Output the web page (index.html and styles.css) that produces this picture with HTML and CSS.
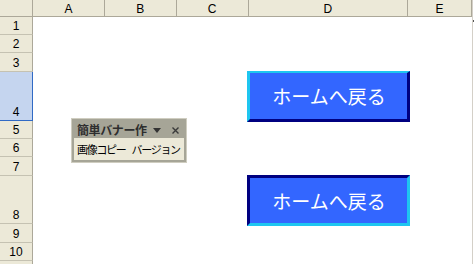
FILE: index.html
```html
<!DOCTYPE html>
<html lang="ja">
<head>
<meta charset="utf-8">
<title>Sheet</title>
<link rel="stylesheet" href="styles.css">
</head>
<body>
<div class="sheet">
  <div class="corner"></div>
  <div class="colheads">
    <div class="ch c72">A</div>
    <div class="ch c72">B</div>
    <div class="ch c72">C</div>
    <div class="ch c160">D</div>
    <div class="ch c64">E</div>
  </div>
  <div class="edge"><span class="tick"></span></div>
  <div class="rowheads">
    <div class="rh r18">1</div>
    <div class="rh r18">2</div>
    <div class="rh r19">3</div>
    <div class="rh r49 sel">4</div>
    <div class="rh r18">5</div>
    <div class="rh r18">6</div>
    <div class="rh r19">7</div>
    <div class="rh r48">8</div>
    <div class="rh r19">9</div>
    <div class="rh r18">10</div>
    <div class="rh r18"></div>
  </div>
  <div class="cells">
    <div class="btn btn-up"><span>ホームへ戻る</span></div>
    <div class="btn btn-down"><span>ホームへ戻る</span></div>
    <div class="toolbar">
      <div class="tb-title">
        <span class="tb-name">簡単バナー作</span>
        <span class="tb-drop"></span>
        <svg class="tb-close" width="7" height="7" viewBox="0 0 7 7"><path d="M0.5 0.5L6.5 6.5M6.5 0.5L0.5 6.5" stroke="#3a3a3a" stroke-width="1.4"/></svg>
      </div>
      <div class="tb-body"><span>画像コピー</span><span class="tb-gap"></span><span>バージョン</span></div>
    </div>
  </div>
</div>
</body>
</html>
```
FILE: styles.css
```css
html, body {
  margin: 0;
  padding: 0;
  background: #ffffff;
}
.sheet {
  display: grid;
  grid-template-columns: 33px 439px 1fr;
  grid-template-rows: 17px 1fr;
  width: 474px;
  height: 264px;
  overflow: hidden;
  font-family: "Liberation Sans", Arial, sans-serif;
  font-size: 12px;
  color: #000;
}
.corner {
  background: #ece9d8;
  border-right: 1px solid #aca899;
  border-bottom: 1px solid #aca899;
  box-sizing: border-box;
}
.colheads {
  display: flex;
  background: #ece9d8;
  border-bottom: 1px solid #aca899;
  box-sizing: border-box;
}
.ch {
  box-sizing: border-box;
  border-right: 1px solid #aca899;
  display: flex;
  align-items: center;
  justify-content: center;
  padding-top: 3px;
  line-height: 13px;
}
.c72 { width: 72px; }
.c160 { width: 160px; }
.c64 { width: 64px; }
.edge {
  grid-row: 1 / 3;
  grid-column: 3;
  border-left: 1px solid #d4d0c8;
  background: #ffffff;
  position: relative;
}
.edge .tick {
  position: absolute;
  left: 0;
  top: 20px;
  width: 1px;
  height: 2px;
  background: #555;
}
.rowheads {
  display: flex;
  flex-direction: column;
  background: #ece9d8;
}
.rh {
  box-sizing: border-box;
  border-right: 1px solid #aca899;
  border-bottom: 1px solid #c5c2b2;
  display: flex;
  align-items: flex-end;
  justify-content: center;
  line-height: 13px;
  padding-bottom: 1px;
  flex: none;
}
.r18 { height: 18px; }
.r19 { height: 19px; }
.r48 { height: 48px; }
.r49 { height: 49px; }
.rh.sel {
  background: #c5d5ef;
  border-right-color: #316ac5;
  border-bottom-color: #316ac5;
}
.cells {
  position: relative;
  background: #ffffff;
}
.btn {
  position: absolute;
  left: 214px;
  width: 163px;
  height: 51px;
  box-sizing: border-box;
  background: #3366ff;
  border: 3px solid;
  display: flex;
  align-items: center;
  justify-content: center;
  font-family: "Noto Sans CJK JP", sans-serif;
  font-size: 19px;
  line-height: 20px;
  color: #ffffff;
  padding-left: 1px;
}
.btn-up {
  top: 54px;
  border-color: #1ec6f0 #000080 #000080 #1ec6f0;
  border-top-width: 2px;
}
.btn-down {
  top: 158px;
  border-color: #000080 #1ec6f0 #1ec6f0 #000080;
  padding-top: 1px;
}
.toolbar {
  position: absolute;
  left: 38px;
  top: 101px;
  width: 116px;
  height: 45px;
  box-sizing: border-box;
  background: #a6a597;
  border: 1px solid #cfcdc0;
  padding: 2px;
  display: flex;
  flex-direction: column;
  font-family: "Noto Sans CJK JP", sans-serif;
}
.tb-title {
  height: 17px;
  display: flex;
  align-items: center;
  padding-left: 3px;
  color: #2e2e2e;
  font-size: 12px;
  font-weight: bold;
  line-height: 14px;
}
.tb-name {
  width: 76px;
  letter-spacing: -0.4px;
}
.tb-drop {
  width: 0;
  height: 0;
  border-left: 4px solid transparent;
  border-right: 4px solid transparent;
  border-top: 5px solid #333;
  margin-left: 0;
  margin-top: 2px;
}
.tb-close {
  margin-left: 11px;
  margin-top: 1px;
}
.tb-body {
  flex: 1;
  background: #ece9d8;
  display: flex;
  align-items: center;
  padding-left: 3px;
  font-size: 11px;
  letter-spacing: -1.3px;
  line-height: 14px;
  color: #000;
  white-space: nowrap;
  overflow: hidden;
}
.tb-gap {
  width: 6px;
  flex: none;
}
```
